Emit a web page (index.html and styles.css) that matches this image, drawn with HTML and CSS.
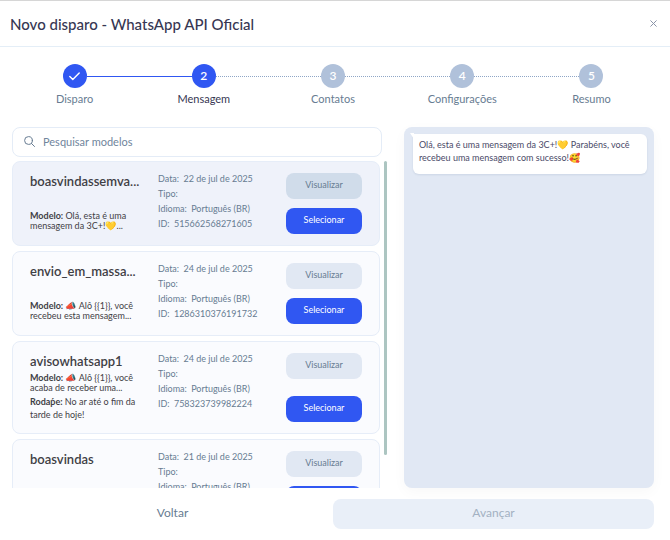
FILE: index.html
```html
<!DOCTYPE html>
<html lang="pt-BR">
<head>
    <meta charset="UTF-8">
    <meta name="viewport" content="width=device-width, initial-scale=1.0">
    <title>Novo disparo - WhatsApp API Oficial</title>
    <link rel="stylesheet" href="styles.css">
</head>
<body>
    <header class="header">
        <h1>Novo disparo - WhatsApp API Oficial</h1>
        <button type="button" class="close" aria-label="Fechar">
            <svg width="7" height="7" viewBox="0 0 7 7"><path d="M.7.7l5.6 5.6M6.3.7L.7 6.3"/></svg>
        </button>
    </header>

    <ol class="stepper">
        <li class="step done">
            <span class="circle">
                <svg width="11" height="9" viewBox="0 0 11 9"><path d="M.8 4.6l3 3L10.2 1"/></svg>
            </span>
            <span class="label">Disparo</span>
        </li>
        <li class="step active"><span class="circle">2</span><span class="label">Mensagem</span></li>
        <li class="step"><span class="circle">3</span><span class="label">Contatos</span></li>
        <li class="step"><span class="circle">4</span><span class="label">Configurações</span></li>
        <li class="step"><span class="circle">5</span><span class="label">Resumo</span></li>
    </ol>

    <main class="content">
        <section class="models">
            <label class="search">
                <svg width="11" height="11" viewBox="0 0 11 11"><circle cx="4.5" cy="4.5" r="3.9"/><path d="M7.4 7.4l3.1 3.1"/></svg>
                <input type="text" placeholder="Pesquisar modelos" aria-label="Pesquisar modelos">
            </label>
            <div class="list-wrap">
                <div class="list">
                    <article class="card selected">
                        <div class="model">
                            <h2>boasvindassemva...</h2>
                            <div>
                                <p class="body"><b>Modelo:</b> Olá, esta é uma<br>mensagem da 3C+!💛...</p>
                            </div>
                        </div>
                        <div class="info">
                            <p>Data: <span>22 de jul de 2025</span></p>
                            <p>Tipo:</p>
                            <p>Idioma: <span>Português (BR)</span></p>
                            <p>ID: <span>515662568271605</span></p>
                        </div>
                        <div class="actions">
                            <button type="button" class="view">Visualizar</button>
                            <button type="button" class="select">Selecionar</button>
                        </div>
                    </article>
                    <article class="card">
                        <div class="model">
                            <h2>envio_em_massa...</h2>
                            <div>
                                <p class="body"><b>Modelo:</b> 📣 Alô {{1}}, você<br>recebeu esta mensagem...</p>
                            </div>
                        </div>
                        <div class="info">
                            <p>Data: <span>24 de jul de 2025</span></p>
                            <p>Tipo:</p>
                            <p>Idioma: <span>Português (BR)</span></p>
                            <p>ID: <span>1286310376191732</span></p>
                        </div>
                        <div class="actions">
                            <button type="button" class="view">Visualizar</button>
                            <button type="button" class="select">Selecionar</button>
                        </div>
                    </article>
                    <article class="card">
                        <div class="model">
                            <h2>avisowhatsapp1</h2>
                            <div>
                                <p class="body"><b>Modelo:</b> 📣 Alô {{1}}, você<br>acaba de receber uma...</p>
                                <p class="foot"><b>Rodaṕe:</b> No ar até o fim da<br>tarde de hoje!</p>
                            </div>
                        </div>
                        <div class="info">
                            <p>Data: <span>24 de jul de 2025</span></p>
                            <p>Tipo:</p>
                            <p>Idioma: <span>Português (BR)</span></p>
                            <p>ID: <span>758323739982224</span></p>
                        </div>
                        <div class="actions">
                            <button type="button" class="view">Visualizar</button>
                            <button type="button" class="select">Selecionar</button>
                        </div>
                    </article>
                    <article class="card">
                        <div class="model">
                            <h2>boasvindas</h2>
                        </div>
                        <div class="info">
                            <p>Data: <span>21 de jul de 2025</span></p>
                            <p>Tipo:</p>
                            <p>Idioma: <span>Português (BR)</span></p>
                        </div>
                        <div class="actions">
                            <button type="button" class="view">Visualizar</button>
                            <button type="button" class="select">Selecionar</button>
                        </div>
                    </article>
                </div>
                <div class="scrollbar"></div>
            </div>
        </section>

        <section class="preview">
            <p class="bubble">Olá, esta é uma mensagem da 3C+!💛 Parabéns, você recebeu uma mensagem com sucesso!🥰</p>
        </section>
    </main>

    <footer class="footer">
        <button type="button" class="back">Voltar</button>
        <button type="button" class="next" disabled>Avançar</button>
    </footer>
</body>
</html>
```
FILE: styles.css
```css
* {
    box-sizing: border-box;
    margin: 0;
    padding: 0;
}

body {
    display: flex;
    flex-direction: column;
    height: 100vh;
    border-top: 1px solid #d6d6d6;
    background: #fff;
    color: #677c92;
    font-family: Lato, "Noto Color Emoji", sans-serif;
    font-size: 10px;
}

button, input {
    border: none;
    background: none;
    color: inherit;
    font: inherit;
}

button {
    cursor: pointer;
}

svg {
    flex: none;
    fill: none;
    stroke: currentColor;
    stroke-linecap: round;
    stroke-linejoin: round;
}

/* header */
.header {
    display: flex;
    align-items: center;
    justify-content: space-between;
    height: 46px;
    padding: 0 12px 0 10px;
    border-bottom: 1px solid #e4eef7;
}

.header h1 {
    color: #373753;
    font-size: 15px;
    font-weight: 500;
}

.close {
    display: flex;
    padding: 1px;
    color: #8a94a8;
}

/* stepper */
.stepper {
    display: flex;
    margin: 17px 14px 0 10px;
    list-style: none;
}

.step {
    position: relative;
    flex: 1;
    display: flex;
    flex-direction: column;
    align-items: center;
    gap: 3px;
    font-size: 11px;
    line-height: 16px;
}

.circle {
    display: flex;
    align-items: center;
    justify-content: center;
    width: 24px;
    height: 24px;
    border-radius: 50%;
    background: #b0c1da;
    color: #fff;
    font-size: 12px;
    font-weight: 600;
}

.circle svg {
    stroke-width: 1.4;
}

/* line to the next circle */
.step:not(:last-child)::after {
    content: "";
    position: absolute;
    top: 12px;
    left: calc(50% + 12px);
    width: calc(100% - 24px);
    border-top: 1px dotted #8fa6c6;
}

.step.done:not(:last-child)::after {
    border-top: 1px solid #3057f2;
}

.done .circle,
.active .circle {
    background: #3057f2;
}

.active .label {
    color: #373753;
}

/* content */
.content {
    flex: 1;
    min-height: 0;
    display: grid;
    grid-template-columns: 3fr 2fr;
    grid-template-rows: 100%;
    gap: 17px;
    margin-top: 20px;
    padding: 0 16px 0 12px;
}

.models {
    display: flex;
    flex-direction: column;
    gap: 4px;
}

.search {
    display: flex;
    align-items: center;
    gap: 8px;
    height: 30px;
    margin-right: 5px;
    padding: 0 11px 2px;
    border: 1px solid #e4ecf7;
    border-radius: 8px;
    color: #677c92;
}

.search input {
    flex: 1;
    outline: none;
    font-size: 11px;
}

.search input::placeholder {
    color: #70859c;
}

.list-wrap {
    flex: 1;
    min-height: 0;
    display: flex;
    gap: 4px;
}

.list {
    flex: 1;
    display: flex;
    flex-direction: column;
    gap: 5px;
    overflow: hidden;
}

.scrollbar {
    width: 3px;
    height: 90%;
    border-radius: 2px;
    background: #acc5c1;
}

.card {
    flex: none;
    display: grid;
    grid-template-columns: 1fr 1fr 76px;
    gap: 20px;
    padding: 9px 17px;
    border: 1px solid #e6edf8;
    border-radius: 8px;
    background: #fafbfe;
}

.card.selected {
    background: #eff2fa;
}

.model {
    display: flex;
    flex-direction: column;
    justify-content: space-between;
    gap: 2px;
    min-width: 0;
    color: #3f4045;
    font-size: 9px;
    white-space: nowrap;
}

.model h2 {
    font-size: 13px;
    font-weight: 600;
    line-height: 20px;
}

.body {
    line-height: 10px;
}

.body:last-child {
    padding-bottom: 5px;
}

.foot {
    padding: 2px 0 3px;
    line-height: 13px;
}

.info {
    font-size: 9px;
    line-height: 15px;
    white-space: nowrap;
}

.info span {
    margin-left: 2px;
}

.actions {
    display: flex;
    flex-direction: column;
    justify-content: space-between;
    gap: 9px;
    padding: 2px 0;
}

.actions button {
    height: 26px;
    padding-bottom: 3px;
    border-radius: 8px;
    font-size: 9px;
}

.view {
    background: #e1e8f3;
}

.selected .view {
    background: #d0dcea;
}

.actions .select {
    background: #3057f2;
    color: #fff;
}

/* preview */
.preview {
    padding: 7px 7px 0 9px;
    border-radius: 8px;
    background: #e1e8f4;
    box-shadow: 0 4px 14px rgba(0, 0, 0, 0.03);
}

.bubble {
    position: relative;
    padding: 4px 6px 10px;
    border-radius: 0 6px 6px 6px;
    background: #fff;
    box-shadow: 0 1px 2px rgba(60, 80, 120, 0.12);
    color: #4a4a68;
    font-size: 9px;
    line-height: 13px;
}

.bubble::before {
    content: "";
    position: absolute;
    top: -1px;
    left: -3px;
    border-top: 6px solid #fff;
    border-left: 4px solid transparent;
}

/* footer */
.footer {
    display: flex;
    padding: 11px 16px 11px 12px;
}

.footer button {
    flex: 1;
    height: 30px;
    padding-bottom: 3px;
    border-radius: 8px;
    font-size: 12px;
}

.footer .next {
    background: #e9eff8;
    color: #a3b1c2;
}
```
